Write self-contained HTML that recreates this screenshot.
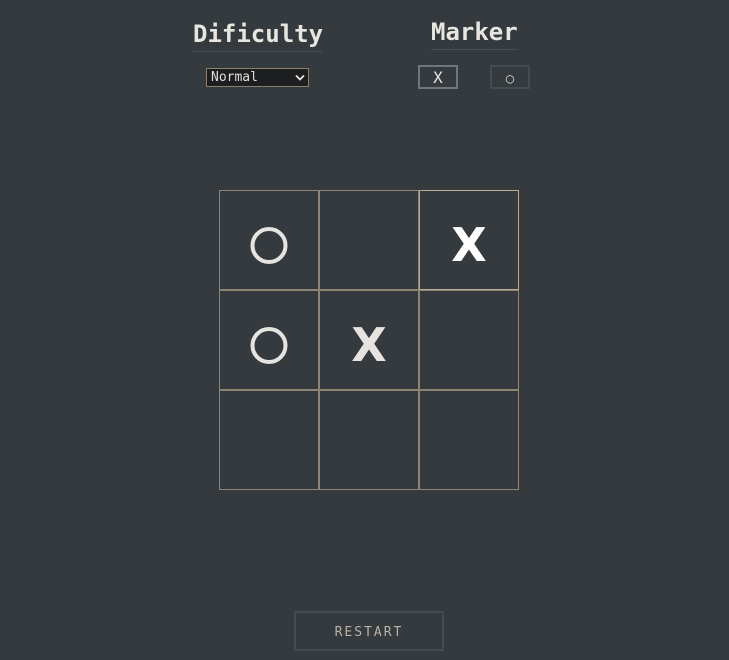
<!DOCTYPE html>
<html><head><meta charset="utf-8"><style>
html,body{margin:0;padding:0;background:#343a3d;width:729px;height:660px;overflow:hidden;position:relative;font-family:"DejaVu Sans Mono","Liberation Mono",monospace}
.h{position:absolute;font-weight:bold;font-size:24px;color:#e8e6e1;line-height:1;padding-bottom:5px;border-bottom:1px solid #4a5155}
.sel{position:absolute;left:206px;top:68px;width:101px;height:17px;background:#1c1e20;border:1px solid #8a7f6e;color:#e0ddd6;font-size:13px;line-height:17px;box-sizing:content-box}
.sel span{position:absolute;left:4px;top:0}
.btn{position:absolute;width:40px;height:24px;box-sizing:border-box;text-align:center;color:#e8e6e1;font-size:16px;line-height:21px}
.grid{position:absolute;left:219px;top:190px}
.c{position:absolute;width:100px;height:100px;box-sizing:border-box;border:1px solid #8e8474}
.x{position:absolute;font-family:"DejaVu Sans",sans-serif;font-weight:bold;font-size:46px;line-height:1;width:100px;text-align:center}
.r{position:absolute;left:294px;top:611px;width:150px;height:40px;box-sizing:border-box;border:2px solid #454c50;color:#b9b2a6;font-size:13px;letter-spacing:2px;text-align:center;line-height:40px}
</style></head><body>
<div class="h" style="left:193px;top:22px;width:129px">Dificulty</div>
<div class="h" style="left:431px;top:20px;width:86px">Marker</div>
<div class="sel"><span>Normal</span>
<svg style="position:absolute;right:3px;top:5px" width="10" height="7" viewBox="0 0 10 7"><path d="M1 1.5L5 5.5L9 1.5" stroke="#e8e6e1" stroke-width="1.8" fill="none"/></svg></div>
<div class="btn" style="left:418px;top:65px;border:2px solid #70767a">X</div>
<div class="btn" style="left:490px;top:65px;border:2px solid #454c50;color:#c8c4bc;font-size:14px;line-height:24px">○</div>
<div class="grid">
<div class="c" style="left:0;top:0"></div>
<div class="c" style="left:100px;top:0"></div>
<div class="c" style="left:0;top:100px"></div>
<div class="c" style="left:100px;top:100px"></div>
<div class="c" style="left:200px;top:100px"></div>
<div class="c" style="left:0;top:200px"></div>
<div class="c" style="left:100px;top:200px"></div>
<div class="c" style="left:200px;top:200px"></div>
<div class="c" style="left:200px;top:0;border-color:#b8ab94"></div>
</div>
<svg style="position:absolute;left:0;top:0" width="729" height="660">
<circle cx="269" cy="245.5" r="16.5" stroke="#e6e4e0" stroke-width="4" fill="none"/>
<circle cx="269" cy="345.5" r="16.5" stroke="#e6e4e0" stroke-width="4" fill="none"/>
</svg>
<div class="x" style="left:419px;top:222px;color:#fff">X</div>
<div class="x" style="left:319px;top:322px;color:#e6e4e0">X</div>
<div class="r">RESTART</div>
</body></html>
